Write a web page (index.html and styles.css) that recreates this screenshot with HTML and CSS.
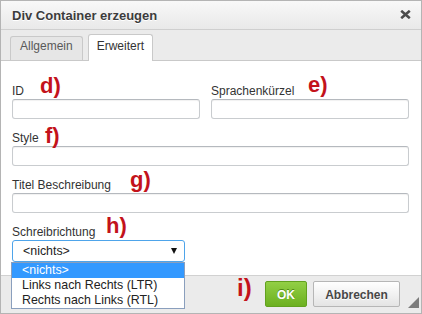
FILE: index.html
```html
<!DOCTYPE html>
<html>
  <head>
    <title>Div Container erzeugen</title>
    <link rel="stylesheet" href="styles.css">
  </head>
  <body>

    <div class="dialog">
      <div class="titlebar">
        <strong class="title">Div Container erzeugen</strong>
        <a class="close" title="Schließen">
          <svg width="11" height="9" viewBox="0 0 11 9">
            <path d="M1.2 0.8 L9.8 8.2 M9.8 0.8 L1.2 8.2" stroke="#4b4b4b" stroke-width="2.6" fill="none"/>
          </svg>
        </a>
      </div>

      <nav class="tabs">
        <span class="tab">Allgemein</span>
        <span class="tab tab-active">Erweitert</span>
      </nav>

      <main class="content">
        <div class="row-split">
          <div class="field">
            <label>ID</label>
            <input type="text">
          </div>
          <div class="field">
            <label>Sprachenkürzel</label>
            <input type="text">
          </div>
        </div>

        <div class="field">
          <label>Style</label>
          <input type="text">
        </div>

        <div class="field">
          <label>Titel Beschreibung</label>
          <input type="text">
        </div>

        <div class="field">
          <label>Schreibrichtung</label>
          <div class="select">
            <span>&lt;nichts&gt;</span>
            <i class="select-arrow"></i>
            <ul class="dropdown">
              <li class="selected">&lt;nichts&gt;</li>
              <li>Links nach Rechts (LTR)</li>
              <li>Rechts nach Links (RTL)</li>
            </ul>
          </div>
        </div>
      </main>

      <footer class="footer">
        <button class="btn btn-ok">OK</button>
        <button class="btn">Abbrechen</button>
        <i class="grip"></i>
      </footer>

      <!-- annotations -->
      <span class="note note-d">d)</span>
      <span class="note note-e">e)</span>
      <span class="note note-f">f)</span>
      <span class="note note-g">g)</span>
      <span class="note note-h">h)</span>
      <span class="note note-i">i)</span>
    </div>

  </body>
</html>
```
FILE: styles.css
```css
*,
*:before,
*:after {
  box-sizing: border-box;
}

html,
body {
  margin: 0px;
  padding: 0px;
  background: #fff;
}

body {
  font-family: 'Liberation Sans', Arial, sans-serif;
  font-size: 12px;
  color: #333;
}

.dialog {
  position: relative;
  display: flex;
  flex-flow: column;
  width: 422px;
  height: 314px;
  border: 1px solid #b4b4b4;
  background: #fff;
}

/* title bar */

.titlebar {
  display: flex;
  align-items: center;
  justify-content: space-between;
  height: 29px;
  padding: 1px 10px 0px 11px;
  background: linear-gradient(#f8f8f8, #e9e9e9);
  border-bottom: 1px solid #cfcfcf;
}
.title {
  font-size: 13px;
  line-height: 27px;
  color: #3c3c3c;
  text-shadow: 0px 1px 0px #fff;
}
.close {
  display: flex;
  margin-top: -3px;
}

/* tabs */

.tabs {
  display: flex;
  align-items: flex-end;
  gap: 5px;
  height: 31px;
  padding-left: 9px;
  background: #ebebeb;
  border-bottom: 1px solid #c9c9c9;
}
.tab {
  padding: 0px 9px 4px;
  line-height: 19px;
  color: #595959;
  background: #e6e6e6;
  border: 1px solid #c9c9c9;
  border-bottom: 0px;
  border-radius: 3px 3px 0px 0px;
}
.tab-active {
  padding: 2px 8px 5px;
  margin-bottom: -1px;
  color: #333;
  background: #fff;
}

/* form */

.content {
  display: flex;
  flex-flow: column;
  gap: 11px;
  flex: 1;
  padding: 22px 12px 0px 11px;
}

.row-split {
  display: grid;
  grid-template-columns: 188px 198px;
  gap: 11px;
}

.field label {
  display: block;
  line-height: 16px;
}
.field input {
  display: block;
  width: 100%;
  height: 20px;
  margin: 0px;
  border: 1px solid #c9cccf;
  border-top-color: #b5b9be;
  border-radius: 3px;
  box-shadow: inset 0px 1px 1px rgba(0, 0, 0, 0.06);
  background: #fff;
}

.select {
  position: relative;
  display: flex;
  align-items: center;
  justify-content: space-between;
  width: 173px;
  height: 22px;
  padding: 0px 7px 0px 10px;
  font-size: 12.4px;
  color: #222;
  border: 1px solid #4ea4ea;
  border-radius: 3px;
}
.select-arrow {
  width: 0px;
  height: 0px;
  border-style: solid;
  border-width: 6px 3.5px 0px 3.5px;
  border-color: #111 transparent transparent transparent;
}

.dropdown {
  position: absolute;
  top: 21px;
  left: -2px;
  width: 174px;
  margin: 0px;
  padding: 0px;
  list-style: none;
  background: #fff;
  border: 1px solid #8a9fbd;
  z-index: 2;
}
.dropdown li {
  padding-left: 10px;
  line-height: 15px;
  color: #222;
}
.dropdown .selected {
  background: #3399ff;
  color: #fff;
}

/* footer */

.footer {
  position: relative;
  display: flex;
  justify-content: flex-end;
  gap: 6px;
  height: 38px;
  padding: 5px 21px 0px 0px;
  background: #ebebeb;
  border-top: 1px solid #d1d1d1;
}

.btn {
  height: 26px;
  padding: 1px 0px 0px;
  width: 87px;
  font-family: 'Liberation Sans', Arial, sans-serif;
  font-size: 12px;
  font-weight: bold;
  color: #474747;
  background: linear-gradient(#fff, #e4e4e4);
  border: 1px solid #b6b6b6;
  border-radius: 2px;
  text-shadow: 0px 1px 0px #fff;
}
.btn-ok {
  width: 42px;
  color: #fff;
  background: linear-gradient(#92cf45, #6cb020);
  border-color: #62a11f;
  text-shadow: 0px -1px 0px #4f8a14;
}

.grip {
  position: absolute;
  right: 2px;
  bottom: 5px;
  width: 0px;
  height: 0px;
  border-style: solid;
  border-width: 0px 0px 11px 11px;
  border-color: transparent transparent #7c7c7c transparent;
}

/* red annotations */

.note {
  position: absolute;
  font-size: 22px;
  font-weight: bold;
  line-height: 1;
  color: #c3121b;
}
.note-d { left: 39px; top: 74px; }
.note-e { left: 307px; top: 73px; }
.note-f { left: 44px; top: 124px; }
.note-g { left: 129px; top: 168px; }
.note-h { left: 105px; top: 214px; }
.note-i { left: 236px; top: 275px; font-size: 24px; }
```
